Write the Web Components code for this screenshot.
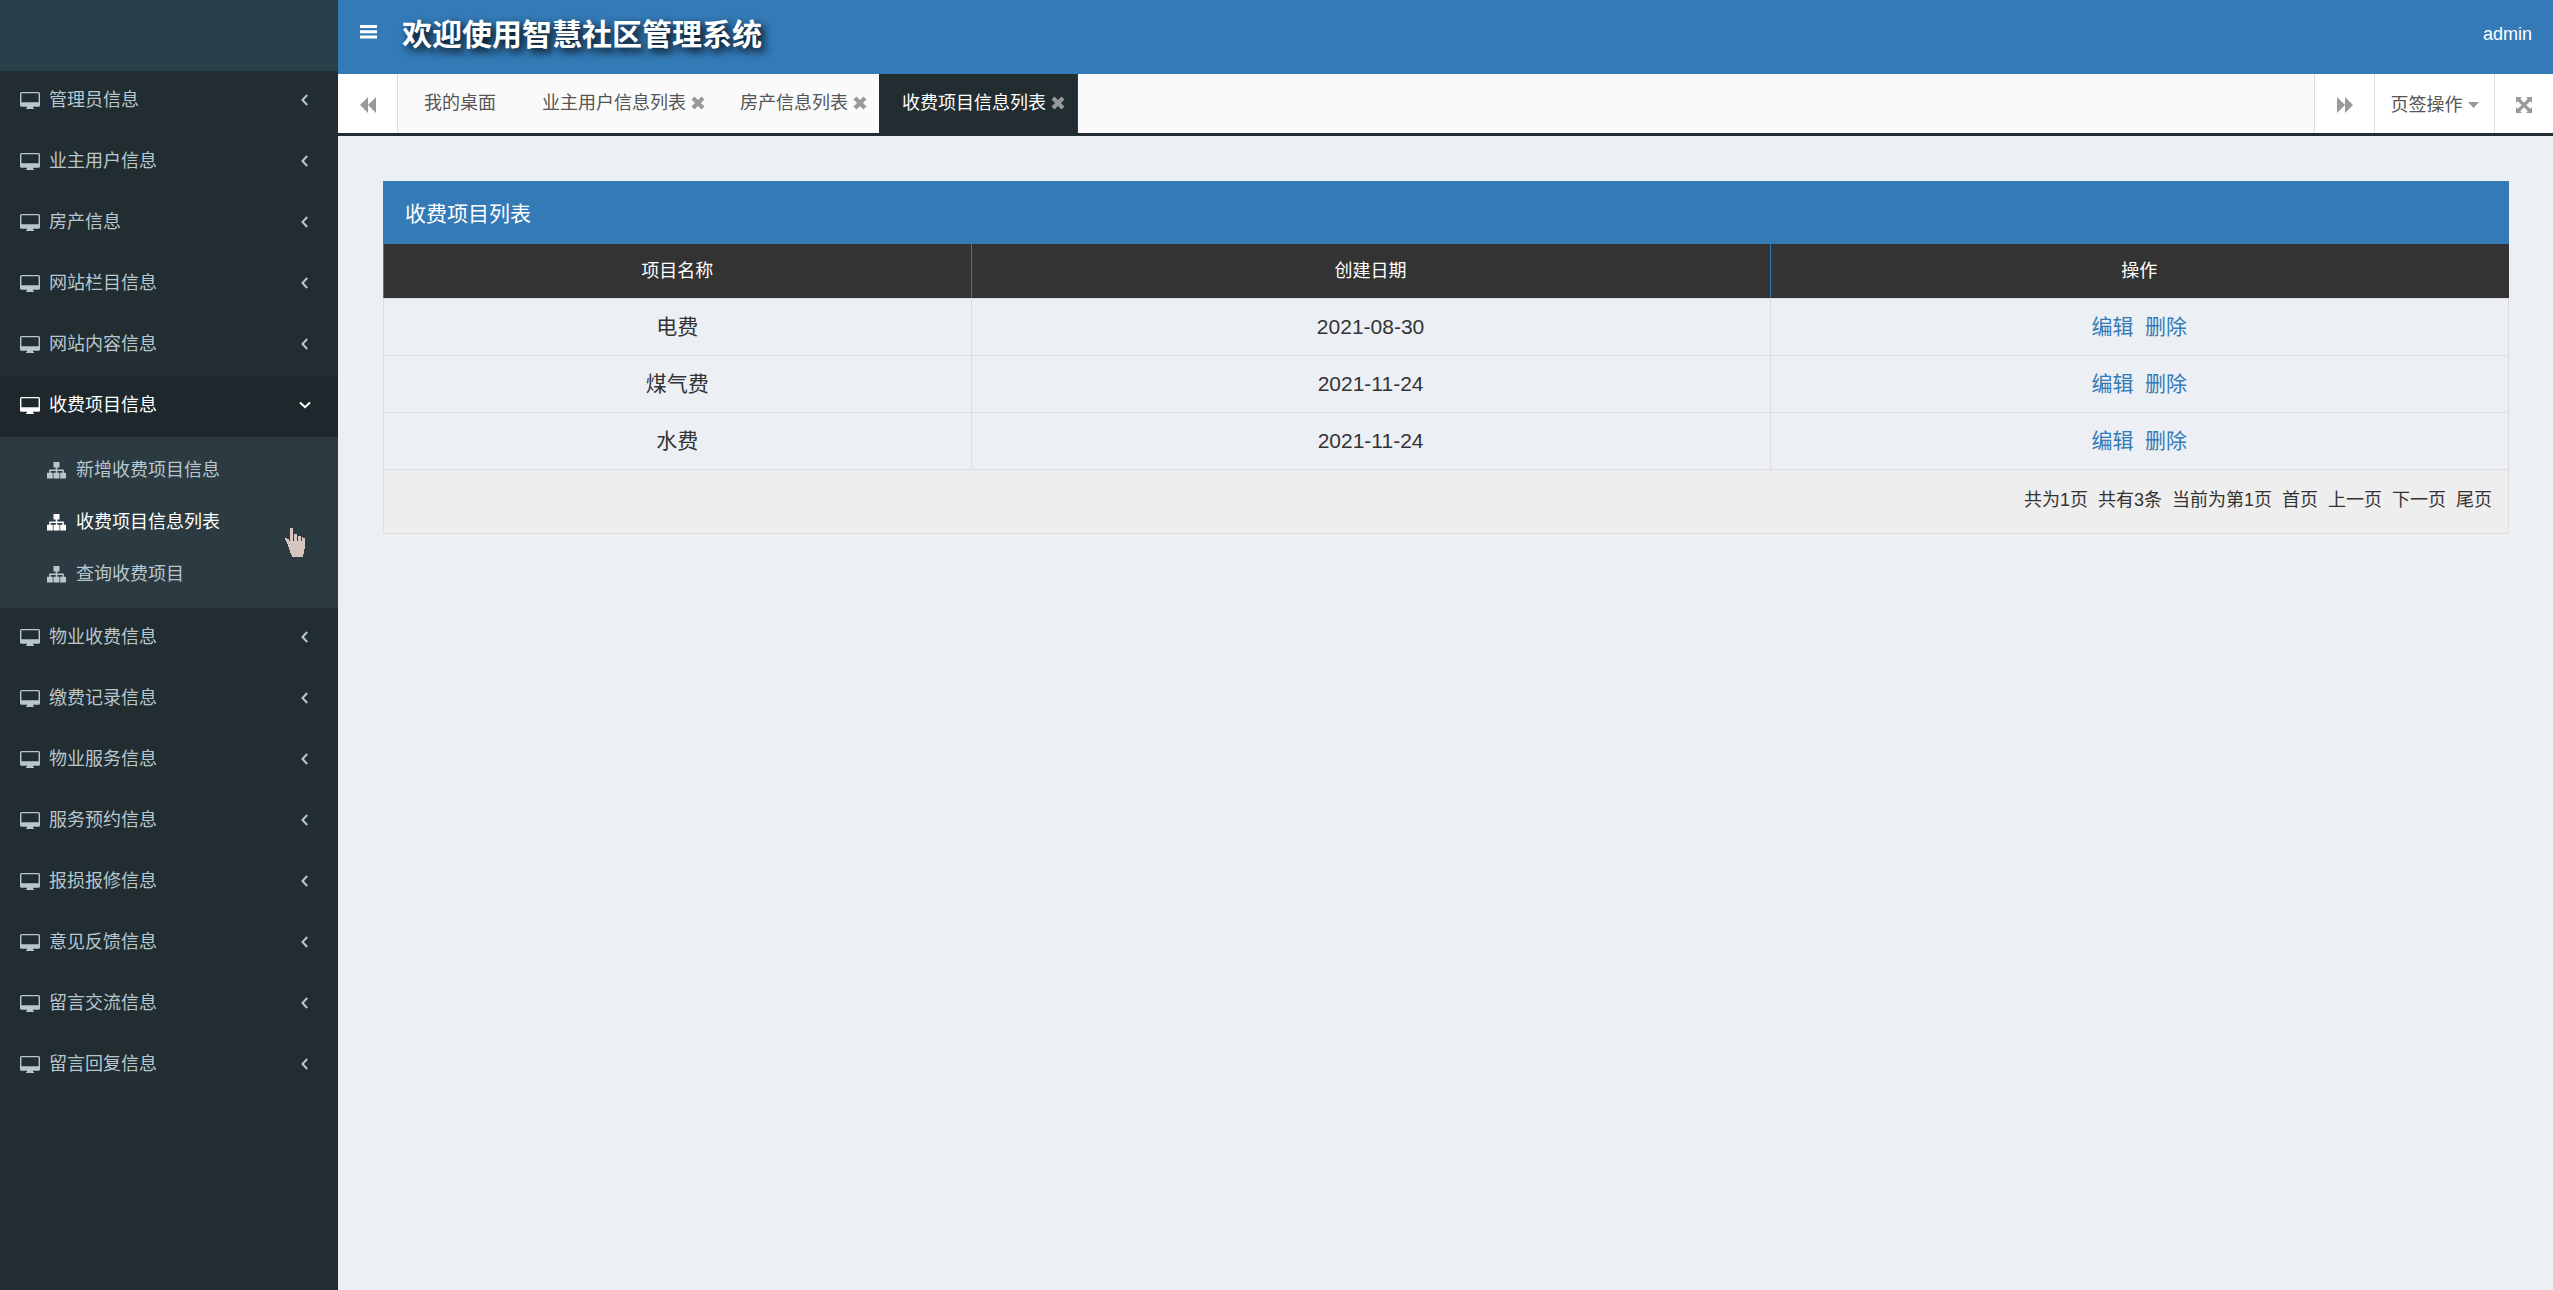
<!DOCTYPE html>
<html lang="zh-CN">
<head>
<meta charset="utf-8">
<title>欢迎使用智慧社区管理系统</title>
<style>
html,body{margin:0;height:100%}
body{font-family:"Liberation Sans","Noto Sans CJK SC",sans-serif;font-size:18px;line-height:26px;color:#333;background:#ecf0f5}
</style>
</head>
<body>
<community-app></community-app>
<script>
const ICONS = {
  desktop: ['0 0 20 17', '<path fill-rule="evenodd" d="M1.500 0h17A1.500 1.500 0 0 1 20 1.500v11.700a1.500 1.500 0 0 1-1.500 1.500H13v1l1 .5v.8H6v-.8l1-.5v-1H1.500A1.500 1.500 0 0 1 0 13.200V1.500A1.500 1.500 0 0 1 1.500 0zM1.400 1.300v8.900h17.200V1.300z"/>'],
  sitemap: ['0 0 19 17', '<path d="M6.500 0h6v5.500h-2.200v2h6.500v3.300H19V16.500h-5.800v-5.700h2.100V9h-5v1.800h2.200v5.700h-6v-5.700h2.300V9H3.700v1.800h2.100v5.700H0v-5.700h2.200V7.500h6.500v-2H6.500z"/>'],
  left: ['0 0 10 12', '<path fill="none" stroke="currentColor" stroke-width="2" d="M7.200 1 2.500 6l4.700 5"/>'],
  down: ['0 0 12 12', '<path fill="none" stroke="currentColor" stroke-width="2" d="M1 3.500 6 8.200l5-4.700"/>'],
  bars: ['0 0 17 14', '<path d="M0 0h17v3H0zM0 5.300h17v3H0zM0 10.600h17v3H0z"/>'],
  back: ['0 0 16 16', '<path d="M8 0v16L0 8zM16 0v16L8 8z"/>'],
  forward: ['0 0 16 16', '<path d="M0 0v16l8-8zM8 0v16l8-8z"/>'],
  close: ['0 0 14 14', '<path fill="none" stroke="currentColor" stroke-width="4.200" stroke-linejoin="round" d="m2 2 10 10M12 2 2 12"/>'],
  caret: ['0 0 11 6', '<path d="M0 0h11L5.500 6z"/>'],
  expand: ['0 0 16 16', '<path d="M0 0h6L4.200 1.800 8 5.700l3.800-3.900L10 0h6v6l-1.800-1.800L10.300 8l3.900 3.800L16 10v6h-6l1.800-1.800L8 10.300l-3.800 3.900L6 16H0v-6l1.800 1.800L5.700 8 1.800 4.200 0 6z"/>'],
  hand: ['0 0 20 29', '<path d="M5 0h3v6h1v7h0V6h3v7h0V8h1h3v5h0V9h2v1h2v11h-1v5h-1v3H7v-2H6v-2H5v-3H4v-3H3v-3H2v-2H1v-2H0v-2h2v1h2v2h1z"/><path fill="none" stroke="#2c3b41" d="M8.500 3v10M12.500 6v7M16.500 8v5"/>']
};

class Base extends HTMLElement {
  render(css, html) {
    const root = this.shadowRoot || this.attachShadow({ mode: 'open' });
    root.innerHTML = `<style>*{box-sizing:border-box}${css}</style>${html}`;
  }
}

class UiIcon extends Base {
  connectedCallback() {
    const [box, body] = ICONS[this.getAttribute('name')];
    const [, , w, h] = box.split(' ');
    this.render(':host{display:inline-flex;flex:none}svg{display:block;fill:currentColor}',
      `<svg width="${w}" height="${h}" viewBox="${box}" aria-hidden="true">${body}</svg>`);
  }
}

class NavItem extends Base {
  connectedCallback() {
    const open = this.hasAttribute('open');
    this.render(`
      :host{display:block;color:#b8c7ce}
      a{display:flex;align-items:center;gap:9px;height:61px;padding:0 25px 3px 20px;color:inherit;text-decoration:none}
      span{flex:1}
      i{display:flex;justify-content:center;width:16px}
      :host([open]) a{background:#1e282c;color:#fff}
      .sub{background:#2c3b41;padding:7px 0 8px}`,
      `<a href="#"><ui-icon name="desktop"></ui-icon><span>${this.getAttribute('label')}</span><i><ui-icon name="${open ? 'down' : 'left'}"></ui-icon></i></a>
      ${open ? '<div class="sub"><slot></slot></div>' : ''}`);
  }
}

class NavSub extends Base {
  connectedCallback() {
    this.render(`
      :host{display:block;color:#b8c7ce}
      :host([active]){color:#fff}
      a{display:flex;align-items:center;gap:10px;height:52px;padding-left:47px;color:inherit;text-decoration:none}`,
      `<a href="#"><ui-icon name="sitemap"></ui-icon><slot></slot></a>`);
  }
}

class SideBar extends Base {
  connectedCallback() {
    const item = t => `<nav-item label="${t}"></nav-item>`;
    this.render(`
      :host{display:block;width:338px;flex:none;background:#222d32}
      .logo{height:71px;background:#293f4a}`,
      `<div class="logo"></div><nav>
      ${['管理员信息', '业主用户信息', '房产信息', '网站栏目信息', '网站内容信息'].map(item).join('')}
      <nav-item label="收费项目信息" open>
        <nav-sub>新增收费项目信息</nav-sub><nav-sub active>收费项目信息列表</nav-sub><nav-sub>查询收费项目</nav-sub>
      </nav-item>
      ${['物业收费信息', '缴费记录信息', '物业服务信息', '服务预约信息', '报损报修信息', '意见反馈信息', '留言交流信息', '留言回复信息'].map(item).join('')}
      </nav>`);
  }
}

class TopBar extends Base {
  connectedCallback() {
    this.render(`
      :host{display:flex;align-items:center;height:74px;padding:0 21px 0 22px;background:#337ab7;color:#fff}
      button{border:0;background:none;color:inherit;padding:0 0 10px;display:flex}
      h1{flex:1;margin:0 0 4px 25px;font-size:30px;line-height:44px;font-weight:700;text-shadow:4px 4px 8px #000}
      a{color:inherit;text-decoration:none;margin-bottom:6px}`,
      `<button aria-label="菜单"><ui-icon name="bars"></ui-icon></button><h1>欢迎使用智慧社区管理系统</h1><a href="#">admin</a>`);
  }
}

class PageTab extends Base {
  connectedCallback() {
    this.render(`
      :host{display:flex;color:#555}
      :host([active]){background:#222d32;color:#fff;border-right:1px solid #293f4a}
      a{display:flex;align-items:center;padding:0 23px 2px;color:inherit;text-decoration:none}
      :host([closable]) a{padding-right:5px}
      button{border:0;background:none;padding:0 12px 2px 0;color:#999;display:flex;align-items:center}`,
      `<a href="#"><slot></slot></a>${this.hasAttribute('closable') ? '<button aria-label="关闭"><ui-icon name="close"></ui-icon></button>' : ''}`);
  }
}

class TabBar extends Base {
  connectedCallback() {
    this.render(`
      :host{display:flex;height:62px;background:#fafafa;border-bottom:3px solid #222d32}
      nav{display:flex;flex:1;padding-left:3px}
      button{border:0;border-left:1px solid #ddd;background:#fff;width:60px;padding:2px 0 0;color:#999;display:flex;align-items:center;justify-content:center;font:inherit}
      button.first{border-left:0;border-right:1px solid #ddd}
      button.last{width:59px}
      button.menu{width:120px;gap:5px}
      button.menu span{color:#555}`,
      `<button class="first" aria-label="向左"><ui-icon name="back"></ui-icon></button>
      <nav><page-tab>我的桌面</page-tab><page-tab closable>业主用户信息列表</page-tab><page-tab closable>房产信息列表</page-tab><page-tab closable active>收费项目信息列表</page-tab></nav>
      <button aria-label="向右"><ui-icon name="forward"></ui-icon></button>
      <button class="menu"><span>页签操作</span><ui-icon name="caret"></ui-icon></button>
      <button class="last" aria-label="全屏"><ui-icon name="expand"></ui-icon></button>`);
  }
}

class FeeTable extends Base {
  connectedCallback() {
    const rows = [['电费', '2021-08-30'], ['煤气费', '2021-11-24'], ['水费', '2021-11-24']];
    this.render(`
      :host{display:block;margin:45px 44px 0 45px}
      h2{margin:0;height:63px;padding:0 22px;background:#337ab7;color:#fff;font-size:21px;font-weight:400;line-height:66px}
      table{width:100%;border-collapse:collapse;table-layout:fixed}
      .a{width:27.650%}.b{width:37.600%}
      th,td{padding:0;text-align:center;border:1px solid #ddd}
      th{height:54px;padding-top:1px;background:#333;color:#fff;font-weight:400;border-top:0;border-left-color:#337ab7;border-right-color:#337ab7}
      th:last-child{border-right-color:#333}
      tbody td{height:57px;font-size:21px}
      tbody a{color:#337ab7;text-decoration:none}
      tfoot td{height:64px;padding:0 16px 2px;text-align:right;background:#eee}
      tfoot a{color:inherit;text-decoration:none}`,
      `<h2>收费项目列表</h2><table><colgroup><col class="a"><col class="b"><col></colgroup>
      <thead><tr><th>项目名称</th><th>创建日期</th><th>操作</th></tr></thead>
      <tbody>${rows.map(([n, d]) => `<tr><td>${n}</td><td>${d}</td><td><a href="#">编辑</a>&nbsp; <a href="#">删除</a></td></tr>`).join('')}</tbody>
      <tfoot><tr><td colspan="3">共为1页&nbsp; 共有3条&nbsp; 当前为第1页&nbsp; <a href="#">首页</a>&nbsp; <a href="#">上一页</a>&nbsp; <a href="#">下一页</a>&nbsp; <a href="#">尾页</a></td></tr></tfoot></table>`);
  }
}

class CommunityApp extends Base {
  connectedCallback() {
    this.render(`
      :host{display:flex;min-height:100vh;position:relative}
      main{flex:1;min-width:0}
      .pointer{position:absolute;left:285px;top:528px;color:#d6c6bf}`,
      `<side-bar></side-bar><main><top-bar></top-bar><tab-bar></tab-bar><fee-table></fee-table></main><ui-icon class="pointer" name="hand"></ui-icon>`);
  }
}

customElements.define('ui-icon', UiIcon);
customElements.define('nav-item', NavItem);
customElements.define('nav-sub', NavSub);
customElements.define('side-bar', SideBar);
customElements.define('top-bar', TopBar);
customElements.define('page-tab', PageTab);
customElements.define('tab-bar', TabBar);
customElements.define('fee-table', FeeTable);
customElements.define('community-app', CommunityApp);
</script>
</body>
</html>
